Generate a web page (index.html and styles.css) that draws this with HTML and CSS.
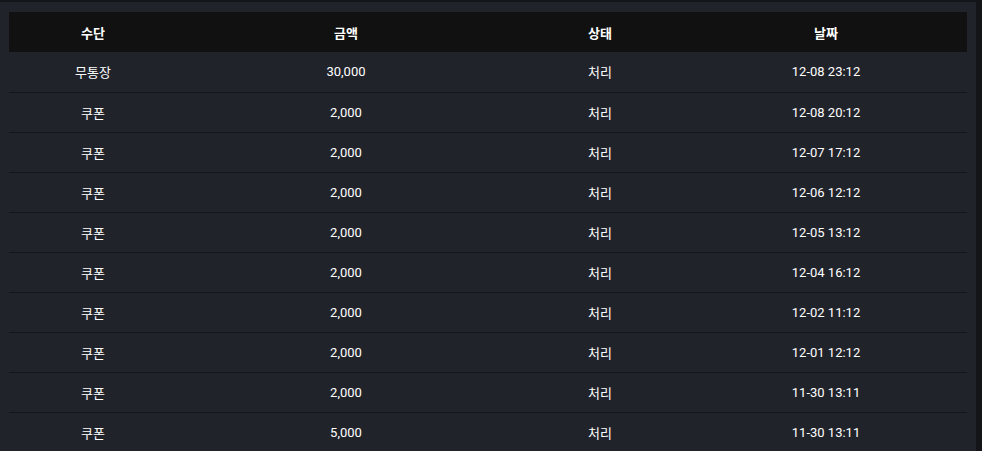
FILE: index.html
```html
<!DOCTYPE html>
<html lang="ko">
  <head>
    <meta charset="utf-8">
    <title>내역</title>
    <link rel="stylesheet" href="styles.css">
  </head>
  <body>
    <div class="panel">
      <table class="history">
        <thead>
          <tr>
            <th class="col-method">수단</th>
            <th class="col-amount">금액</th>
            <th class="col-status">상태</th>
            <th class="col-date">날짜</th>
          </tr>
        </thead>
        <tbody>
          <tr><td>무통장</td><td>30,000</td><td>처리</td><td>12-08 23:12</td></tr>
          <tr><td>쿠폰</td><td>2,000</td><td>처리</td><td>12-08 20:12</td></tr>
          <tr><td>쿠폰</td><td>2,000</td><td>처리</td><td>12-07 17:12</td></tr>
          <tr><td>쿠폰</td><td>2,000</td><td>처리</td><td>12-06 12:12</td></tr>
          <tr><td>쿠폰</td><td>2,000</td><td>처리</td><td>12-05 13:12</td></tr>
          <tr><td>쿠폰</td><td>2,000</td><td>처리</td><td>12-04 16:12</td></tr>
          <tr><td>쿠폰</td><td>2,000</td><td>처리</td><td>12-02 11:12</td></tr>
          <tr><td>쿠폰</td><td>2,000</td><td>처리</td><td>12-01 12:12</td></tr>
          <tr><td>쿠폰</td><td>2,000</td><td>처리</td><td>11-30 13:11</td></tr>
          <tr><td>쿠폰</td><td>5,000</td><td>처리</td><td>11-30 13:11</td></tr>
        </tbody>
      </table>
    </div>
  </body>
</html>
```

FILE: styles.css
```css
html, body {
  margin: 0;
  padding: 0;
  height: 100%;
  overflow: hidden;
  background: #141518;
  font-family: Roboto, "Noto Sans CJK KR", sans-serif;
  font-size: 13px;
  color: #ffffff;
}
.panel {
  margin-top: 2px;
  width: 976px;
  height: 100%;
  box-sizing: border-box;
  padding: 10px 0 0 9px;
  background: #21232b;
}
.history {
  width: 958px;
  border-collapse: collapse;
  table-layout: fixed;
}
.history th {
  height: 40px;
  padding: 0;
  background: #111111;
  font-weight: 700;
  text-align: center;
}
.history td {
  height: 38px;
  padding: 0 0 1px;
  text-align: center;
  font-weight: 400;
  border-top: 1px solid #15161b;
}
.history tbody tr:first-child td {
  border-top: none;
  height: 39px;
}
.col-method { width: 168px; }
.col-amount { width: 338px; }
.col-status { width: 170px; }
.col-date { width: 282px; }
```
